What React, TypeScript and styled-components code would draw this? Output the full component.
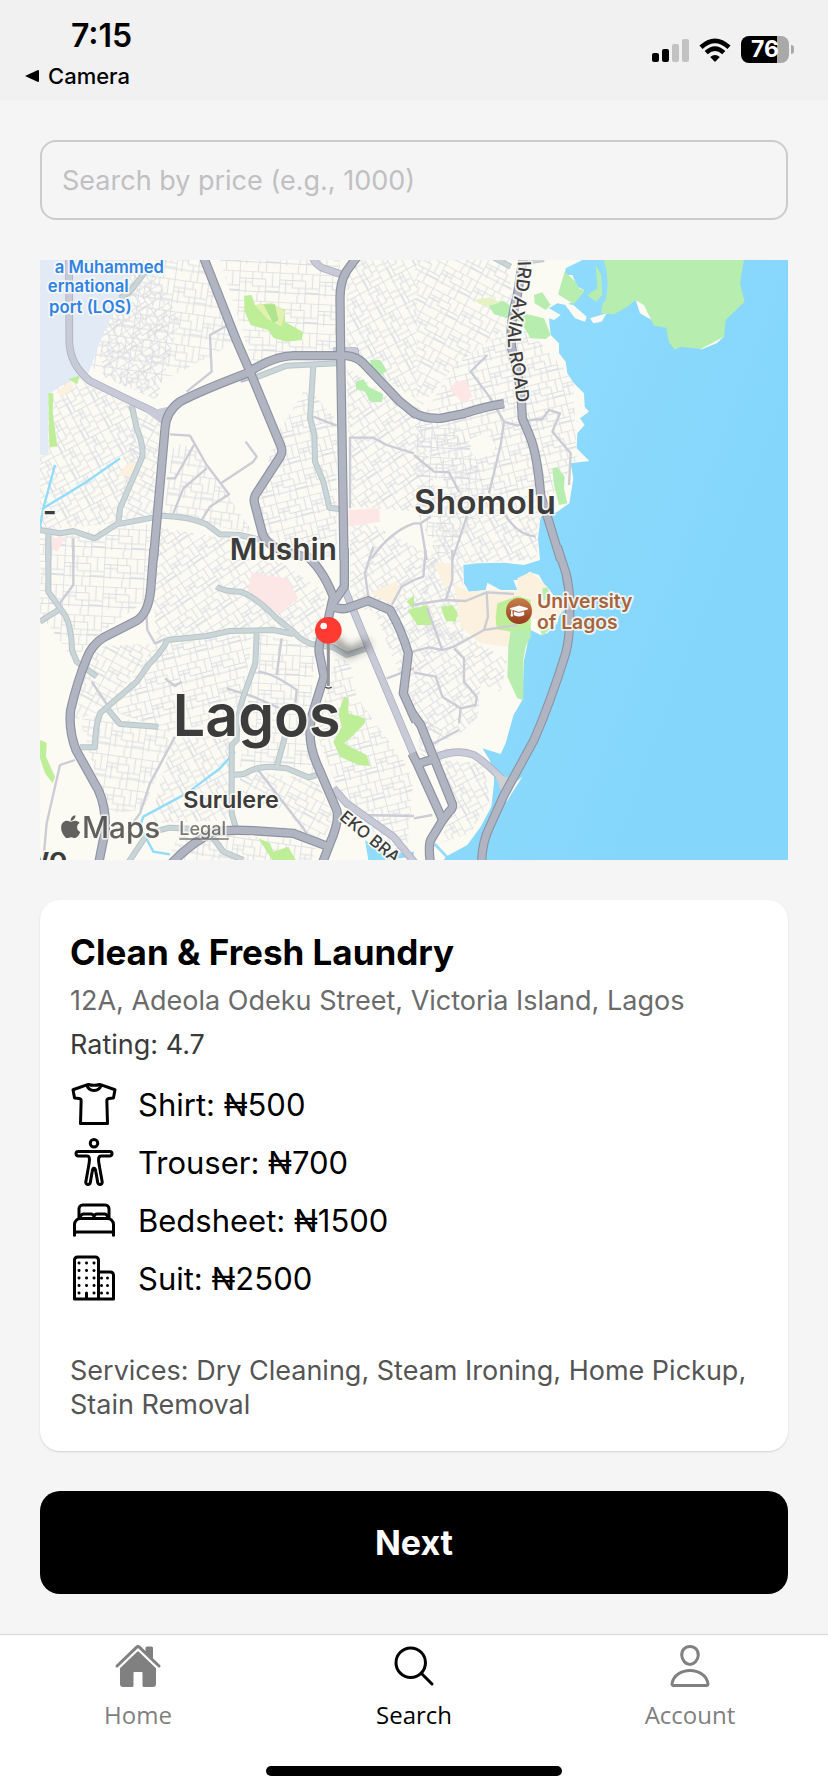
import React from "react";
import styled, { createGlobalStyle } from "styled-components";
import {
  IoShirtOutline,
  IoBodyOutline,
  IoBedOutline,
  IoBusinessOutline,
  IoHome,
  IoSearchOutline,
  IoPersonOutline,
} from "react-icons/io5";
import { FaApple, FaGraduationCap } from "react-icons/fa";
import type { IconType } from "react-icons";

const GlobalStyle = createGlobalStyle`
  *, *::before, *::after { box-sizing: border-box; }
  body {
    margin: 0;
    background: #f5f5f5;
    color: #000;
    font-family: Inter, "Liberation Sans", sans-serif;
  }
`;

const Screen = styled.div`
  display: flex;
  flex-direction: column;
  min-height: 100vh;
`;

/* ---------- status bar ---------- */

const StatusBar = styled.header`
  display: flex;
  justify-content: space-between;
  align-items: flex-start;
  height: 100px;
  padding: 16px 39px 0 24px;
  background: #f1f1f1;
`;

const StatusLeft = styled.div`
  display: flex;
  flex-direction: column;
`;

const Time = styled.time`
  padding-left: 47px;
  font-size: 32px;
  line-height: 40px;
  font-weight: 600;
`;

const BackLink = styled.a`
  display: flex;
  align-items: center;
  gap: 8px;
  color: #000;
  font-size: 22px;
  line-height: 40px;
  font-weight: 500;
  text-decoration: none;
`;

const StatusIcons = styled.div`
  display: flex;
  align-items: center;
  gap: 10px;
  padding-top: 20px;
`;

const Battery = styled.div`
  position: relative;
  width: 48px;
  height: 27px;
  border-radius: 8px;
  background: linear-gradient(to right, #000 76%, #a9a9a9 76%);
  color: #fff;
  font-size: 23px;
  line-height: 27px;
  font-weight: 700;
  text-align: center;

  &::after {
    content: "";
    position: absolute;
    top: 9px;
    right: -5px;
    width: 3px;
    height: 9px;
    border-radius: 0 4px 4px 0;
    background: #a9a9a9;
  }
`;

/* ---------- content ---------- */

const Main = styled.main`
  display: flex;
  flex: 1;
  flex-direction: column;
  gap: 40px;
  padding: 40px;
`;

const SearchInput = styled.input`
  width: 100%;
  height: 80px;
  padding: 0 20px;
  border: 2px solid #cccccc;
  border-radius: 16px;
  background: transparent;
  color: #000;
  font-family: inherit;
  font-size: 27px;

  &::placeholder {
    color: #c0c0c2;
    opacity: 1;
  }
`;

const MapFrame = styled.section`
  height: 600px;
  overflow: hidden;
  background: #87d7fb;

  > svg {
    display: block;
    width: 100%;
    height: 100%;
  }
`;

const MapText = styled.text<{ $size: number; $weight?: number; $fill?: string }>`
  font-family: Inter, "Liberation Sans", sans-serif;
  font-size: ${(p) => p.$size}px;
  font-weight: ${(p) => p.$weight ?? 600};
  fill: ${(p) => p.$fill ?? "#3c3c3c"};
  stroke: #fbfaf5;
  stroke-opacity: 0.85;
  stroke-width: 11px;
  stroke-linejoin: round;
  paint-order: stroke;
`;

const Card = styled.article`
  padding: 30px 30px 29px;
  border-radius: 20px;
  background: #fff;
  box-shadow: 0 1px 2px rgba(0, 0, 0, 0.14);
`;

const Title = styled.h1`
  margin: 0 0 10px;
  font-size: 35px;
  line-height: 44px;
  font-weight: 700;
`;

const Address = styled.p`
  margin: 0 0 10px;
  color: #6b6b6b;
  font-size: 27px;
  line-height: 34px;
`;

const Rating = styled.p`
  margin: 0 0 18px;
  color: #3a3a3a;
  font-size: 27px;
  line-height: 34px;
`;

const PriceList = styled.ul`
  display: flex;
  flex-direction: column;
  gap: 10px;
  margin: 0;
  padding: 0;
  list-style: none;
`;

const PriceRow = styled.li`
  display: flex;
  align-items: center;
  gap: 20px;
  height: 48px;
  font-size: 31px;
`;

const Services = styled.p`
  margin: 52px 0 0;
  color: #555;
  font-size: 27px;
  line-height: 34px;
`;

const NextButton = styled.button`
  width: 100%;
  height: 103px;
  border: 0;
  border-radius: 20px;
  background: #000;
  color: #fff;
  font-family: inherit;
  font-size: 34px;
  font-weight: 700;
`;

/* ---------- tab bar ---------- */

const TabBar = styled.footer`
  display: flex;
  flex-direction: column;
  align-items: center;
  gap: 34px;
  padding: 7px 0 16px;
  border-top: 1px solid #d6d6d6;
  background: #fff;
`;

const Tabs = styled.nav`
  display: grid;
  grid-template-columns: repeat(3, 1fr);
  width: 100%;
`;

const Tab = styled.a<{ $active?: boolean }>`
  display: flex;
  flex-direction: column;
  align-items: center;
  gap: 8px;
  color: ${(p) => (p.$active ? "#000" : "#808080")};
  font-family: "Open Sans", "Noto Sans", sans-serif;
  font-size: 24px;
  line-height: 34px;
  text-decoration: none;
`;

const HomeIndicator = styled.div`
  width: 296px;
  height: 10px;
  border-radius: 5px;
  background: #000;
`;

/* ---------- map data: four tiles, three units per pixel ---------- */

type Tile = "nw" | "ne" | "sw" | "se";
type Line = [Tile, string];

const shift: Record<Tile, string> = {
  nw: "translate(0 -15)",
  ne: "translate(1122 -15)",
  sw: "translate(0 870)",
  se: "translate(1122 870)",
};

const highways: Line[] = [
  ["nw", "M488 0L590 258L630 350L722 572Q730 590 720 606L646 720Q640 732 644 746L668 838Q676 860 710 880L790 905"],
  ["nw", "M955 0L920 48Q900 80 900 130L902 300L912 915"],
  ["nw", "M340 915L375 520Q378 470 420 440Q480 408 620 355Q700 303 760 302L920 302Q950 305 970 325L1080 440L1130 480"],
  ["ne", "M-10 465Q20 492 80 490L150 476Q210 455 270 446"],
  ["ne", "M330 -5L310 120Q285 210 293 280L320 400L325 490L348 545Q370 600 380 720L440 915"],
  ["se", "M430 -10L456 70Q470 130 467 190Q468 260 455 310C430 390 395 490 360 570L270 735L225 835Q203 880 203 945"],
  ["sw", "M790 10Q845 50 880 140L862 220Q828 280 840 320L852 380L815 500Q800 570 830 640L890 780Q900 810 870 880L845 945"],
  ["sw", "M913 -5L913 110L875 165Q890 180 920 175L985 152L1050 180Q1085 240 1105 310L1090 430L1128 515"],
  ["sw", "M342 -5L332 120Q325 190 290 212L190 263Q155 285 140 325Q110 400 92 480Q85 540 108 600L175 720Q198 770 196 840L175 945"],
  ["se", "M-8 485L20 525L115 762Q118 775 105 785L85 812L50 870Q42 890 50 945"],
  ["se", "M-6 610L10 642L55 628M10 642L84 805"],
  ["sw", "M390 945Q450 880 520 846Q560 838 640 842L760 850L860 888"],
];

const ramps: Line[] = [
  ["nw", "M87 0L88 260Q90 330 150 378L260 432L330 465L378 490"],
  ["nw", "M815 0Q825 30 850 40L910 60"],
  ["nw", "M880 288L945 288L950 318M600 372L640 360"],
  ["sw", "M915 120L985 290L1128 630"],
  ["sw", "M880 715L920 760L1060 860L1130 945"],
  ["se", "M65 622Q130 595 180 615Q220 640 282 706"],
];

const avenues: Line[] = [
  ["nw", "M0 825L60 835L100 828L165 850L230 808L370 782Q450 785 500 808L540 838L600 840L690 862"],
  ["nw", "M275 450L290 520Q315 580 305 610L240 760L235 805"],
  ["nw", "M820 330L810 490L823 540L825 620L850 680L868 758L905 763"],
  ["nw", "M640 370L740 332L890 325"],
  ["nw", "M320 45L270 110L240 130"],
  ["nw", "M25 835L25 915"],
  ["ne", "M235 5L290 35M330 20L390 12"],
  ["sw", "M25 -10L25 125L75 195Q95 230 96 300L110 335L170 380M0 215L55 180"],
  ["sw", "M530 110Q550 125 600 125Q640 135 710 205L760 245Q790 280 830 285L880 292L920 315L980 295"],
  ["sw", "M382 270L500 258L570 243L700 240L760 252M382 270Q370 300 325 345L290 395L180 490Q165 530 165 592L120 592"],
  ["sw", "M205 480L240 522L355 530"],
  ["sw", "M650 250L646 340L610 440Q590 500 590 570L575 585L575 790L588 835"],
  ["sw", "M575 675L612 672Q645 650 690 650L740 655L805 682L830 675M735 560L710 650"],
  ["sw", "M315 862L260 945M340 845L390 833L450 836M520 865L550 905L610 930"],
];

const localRoads: Line[] = [
  ["nw", "M390 538L450 542L500 630L567 718L510 755L485 795M462 570L405 670L380 670M500 640L430 700L400 775"],
  ["nw", "M617 560L650 605L640 620L545 683M930 760L930 548L1000 548L1040 570L1122 595M1122 805Q1050 830 995 910"],
  ["nw", "M440 410L515 350L510 240L560 212M820 485L890 512M100 850L100 915"],
  ["ne", "M220 300L170 350L230 430L270 500L310 512L350 495L385 492L405 465L438 475L415 530L470 595L465 690"],
  ["ne", "M270 500L260 570L225 715M0 600L60 650L105 652L135 710M160 780L115 915M0 805L20 805L38 915M50 785L20 805M270 775Q310 840 365 845"],
  ["sw", "M100 -10L100 105L55 165M318 170L322 240L345 280L380 265M1000 -10L975 70L985 140M1122 90L1085 110L1055 165"],
  ["sw", "M155 395L205 470M405 560L330 700L300 790L270 830M105 630L60 645L20 820L10 930M655 365Q700 370 770 420L765 470M725 265L710 375"],
  ["sw", "M560 415L640 440L720 475M375 385L405 408L425 395M650 655L790 835L800 850M960 795L1122 798M1040 385L1122 355"],
  ["se", "M-5 165L90 150L155 153L218 127L300 132M218 127L222 200L210 240L120 290L85 300L45 292L-5 305M210 240L310 225M40 175L85 300"],
  ["se", "M120 295L150 325L150 395L188 440L185 465L140 475L135 520M0 368L65 380L85 440L140 475M115 0L115 90L95 150M0 90L28 80L35 0M50 585L135 540M0 805L55 795"],
];

const parks: Line[] = [
  ["nw", "M612 122L635 120L645 150L690 145L735 165L735 200L790 232L785 255L740 260L700 248L685 225L632 210L614 170Z"],
  ["nw", "M25 415L40 415L38 470L52 575L28 575ZM85 372L118 362L112 388Z"],
  ["sw", "M0 570L20 578L18 620L45 680L38 700L15 670L0 625ZM1100 155L1122 135L1122 180Z"],
  ["sw", "M912 440L925 445L925 490L975 505L975 520L935 560L912 580L930 590L980 615L990 648L955 645L900 620L880 575L905 530L895 490Z"],
  ["sw", "M655 865L690 880L700 905L745 890L770 935L700 935Z"],
  ["se", "M-20 180L40 165L55 225L10 225ZM80 170L115 165L132 190L125 215L95 212ZM245 200L250 160L310 138L350 150L350 240L290 245L248 238Z"],
];

const parksCool: Line[] = [
  ["nw", "M990 315L1020 315L1040 345L1025 360L995 340ZM948 380L970 372L985 395L1030 418L1025 442L990 440L975 410L948 402Z"],
  ["ne", "M556 0L992 0L978 85L992 140L935 195L930 245L860 282L800 275L782 284L765 262L757 218L720 212L690 150L665 135L640 155L600 178L560 175L575 100Z"],
  ["ne", "M452 50L485 80L495 100L512 108L480 148L432 118ZM545 30L562 60L565 120L545 140L520 120L550 100ZM360 120L385 112L410 150L395 165L362 145Z"],
  ["ne", "M220 145L270 138L310 170L390 190L410 240L395 252L350 250L320 200L240 178Z"],
  ["ne", "M415 640L430 637L452 665L450 700L460 745L435 750L420 690Z"],
  ["se", "M290 240L350 235L350 260L335 290L328 330L328 450L310 445L280 380L283 290ZM385 115L400 112L410 150L388 150ZM375 230L430 215L385 258Z"],
];

const pinkAreas: Line[] = [
  ["nw", "M925 765L1018 760L1020 800L925 815ZM35 850L78 845L52 890L34 882Z"],
  ["ne", "M105 405L125 380L155 375L175 425L150 445Z"],
  ["sw", "M635 68L740 85L775 145L715 193L625 120Z"],
];

const sandAreas: Line[] = [
  ["nw", "M235 662L265 622L290 625L275 662ZM50 410L95 375L100 400L70 424Z"],
  ["sw", "M990 130L1070 92L1075 125L1060 165Z"],
  ["se", "M62 40L115 40L112 95L92 118L80 85ZM120 100L165 125L220 120L310 125L310 85L350 65L400 110L450 180L420 215L320 200L285 290L200 280L140 230Z"],
];

const blankLots: Line[] = [
  ["nw", "M405 490L600 390L640 400L700 540L690 600L545 683L450 542L395 535Z"],
  ["nw", "M645 365L740 345L720 480L700 500Z"],
  ["ne", "M365 15L450 50L440 115L400 110L360 115L330 80Z"],
  ["ne", "M165 555L215 530L245 570L235 600L180 605Z"],
  ["sw", "M930 330L980 320L1122 640L1080 620L950 440Z"],
  ["sw", "M0 480L80 480L100 610L0 560ZM60 660L120 650L180 760L160 900L30 900Z"],
  ["sw", "M590 760L740 780L780 835L600 830Z"],
  ["se", "M200 400L320 455L260 600L200 590L130 600L60 590L190 520Z"],
];

const landPath =
  "M0 0H1627L1577 25L1574 45L1597 45L1612 80L1632 90L1602 125L1577 135L1552 130L1527 145L1562 165L1542 180L1527 175L1532 225L1557 250L1557 280L1577 305L1582 340L1602 370L1632 400L1634 440L1647 455L1620 475L1634 495L1612 520L1610 565L1648 603L1592 610L1600 655L1588 730L1552 755L1502 770L1494 835L1500 900L1452 915L1392 908L1312 910L1270 915L1272 970L1287 995L1337 990L1342 968L1382 990L1432 990L1420 960L1452 960L1467 935L1497 945L1522 990L1562 1050L1552 1090L1522 1120L1502 1125L1472 1110L1452 1200L1447 1320L1420 1365L1397 1450L1382 1482L1327 1465L1352 1505L1332 1510L1362 1540L1362 1570L1354 1640L1322 1700L1282 1755L1217 1790L1212 1800H0Z";

/* Neighbourhood blocks: outline in map units, with the street grid drawn in each. */
const districts: [number, string][] = [
  [0, "M0 0H500L600 240L300 400L150 320L80 200Z"],
  [1, "M170 60L330 20L420 180L350 420L190 350Z"],
  [2, "M540 0H900V280H740L640 320Z"],
  [3, "M920 0H1130V420L920 280Z"],
  [4, "M1130 0H1400L1430 180L1240 320L1130 460Z"],
  [5, "M1240 320L1440 180L1600 360L1610 600L1500 760H1260L1130 500Z"],
  [1, "M920 320L1140 480L1200 760L930 740Z"],
  [2, "M1130 500H1260L1360 720L1200 900L1130 760Z"],
  [3, "M0 330L140 350L270 440L300 600L220 790L0 810Z"],
  [4, "M280 450L360 480L340 760L240 790Z"],
  [0, "M400 550L460 560L560 700L640 820L370 770Z"],
  [5, "M700 540L800 380L890 480V900L690 840L650 740Z"],
  [1, "M930 760L1200 900L1130 1080L930 1040Z"],
  [3, "M1200 740L1500 770L1490 900L1270 910V1150L1130 1120Z"],
  [2, "M0 830L330 790L320 1020L180 1120L100 1200L0 1060Z"],
  [1, "M350 800L640 850L860 1000L830 1140L640 1110L350 1150L340 1000Z"],
  [4, "M160 1160L350 1150L200 1350L100 1380Z"],
  [5, "M350 1150L640 1120L600 1360L400 1420L210 1350Z"],
  [0, "M120 1380L200 1360L400 1420L310 1650L200 1660Z"],
  [3, "M400 1420H570V1680L330 1690Z"],
  [2, "M650 1120L830 1160L800 1430L830 1540L600 1520Z"],
  [5, "M890 1180L960 1240L1010 1340L1120 1560L1100 1790L920 1660L830 1420Z"],
  [1, "M990 1020L1130 1050L1320 1150L1400 1200L1380 1310L1250 1430L1140 1400Z"],
  [4, "M1130 1360L1250 1440L1190 1520L1140 1480Z"],
  [3, "M1190 1500L1330 1510L1350 1620L1290 1720L1200 1750L1240 1640Z"],
  [4, "M600 1530L830 1560L880 1670L850 1740L600 1700Z"],
  [0, "M420 1720L830 1740L820 1800H380Z"],
];

const grids = [
  { angle: 8, w: 34, h: 24 },
  { angle: -34, w: 32, h: 20 },
  { angle: 3, w: 40, h: 22 },
  { angle: 62, w: 30, h: 20 },
  { angle: 28, w: 36, h: 20 },
  { angle: -14, w: 34, h: 20 },
];

const Shapes = ({ items, fill }: { items: Line[]; fill: string }) => (
  <g fill={fill}>
    {items.map(([tile, d]) => (
      <path key={tile + d} d={d} transform={shift[tile]} />
    ))}
  </g>
);

const Roads = ({ items, color, width }: { items: Line[]; color: string; width: number }) => (
  <g fill="none" stroke={color} strokeWidth={width} strokeLinejoin="round">
    {items.map(([tile, d]) => (
      <path key={tile + d} d={d} transform={shift[tile]} />
    ))}
  </g>
);

const MapView = () => (
  <svg viewBox="0 0 2244 1800" preserveAspectRatio="xMidYMid slice" role="img" aria-label="Map of Lagos">
    <defs>
      <linearGradient id="sea" x1="0" y1="0" x2="1" y2="0.3">
        <stop offset="0.55" stopColor="#91dcfd" />
        <stop offset="1" stopColor="#84d6fb" />
      </linearGradient>
      <linearGradient id="campus" x1="0" y1="0" x2="0" y2="1">
        <stop offset="0" stopColor="#c8804a" />
        <stop offset="1" stopColor="#953c1e" />
      </linearGradient>
      <filter id="soft" x="-50%" y="-100%" width="200%" height="300%">
        <feGaussianBlur stdDeviation="12" />
      </filter>
      <clipPath id="land">
        <path d={landPath} />
      </clipPath>
      {grids.map(({ angle, w, h }, i) => (
        <pattern
          key={i}
          id={`streets-${i}`}
          width={w * 3}
          height={h * 4}
          patternUnits="userSpaceOnUse"
          patternTransform={`rotate(${angle})`}
        >
          <path
            d={`M0 1H${w * 3}M0 ${h}H${w * 2}M${w} ${h * 2}H${w * 3}M0 ${h * 3 - 6}H${w * 3}M${w} 0V${h * 2}M${w * 2} ${h}V${h * 4}M${w / 2} ${h}V${h * 3}M1 0V${h * 4}M${w * 2.5} 0V${h * 2}M${w * 1.4} ${h * 3}V${h * 4}M0 ${h * 1.5}H${w}M${w * 2} ${h * 2.6}H${w * 3}M${w * 1.7} 0V${h}M${w * 1.5} ${h * 2}V${h * 3}`}
            fill="none"
            stroke="#d9dbe2"
            strokeWidth="3"
          />
        </pattern>
      ))}
      <path id="axial-road" d="M1432 -30L1434 35Q1420 140 1406 200Q1398 260 1420 340L1436 475" />
      <path id="eko-bridge" d="M896 1676L1060 1810" />
    </defs>

    <rect width="2244" height="1800" fill="url(#sea)" />
    <path d={landPath} fill="#fbfaf3" />
    <g fill="#fcfaf3">
      <path d="M1447 1550L1397 1630L1410 1580Z" />
      <path d="M1692 20L1722 10L1740 35L1735 55L1705 70ZM1572 130L1600 135L1640 170L1635 185L1605 175ZM1650 175L1700 160L1685 185L1660 190ZM1787 120L1842 150L1835 180L1800 160ZM1980 270L2010 240L2054 228L2030 250Z" />
    </g>

    <g clipPath="url(#land)">
      {districts.map(([grid, d]) => (
        <path key={d} d={d} fill={`url(#streets-${grid})`} opacity={0.9} />
      ))}
      <Shapes items={blankLots} fill="#fbfaf3" />
    </g>

    <path d="M0 0H300L235 130L190 220L145 340L130 355L70 370L25 405V585H0Z" fill="#e2eaf6" />
    <Shapes items={sandAreas} fill="#fcf0df" />
    <Shapes items={pinkAreas} fill="#fde6e6" />
    <Shapes items={parks} fill="#bfee98" />
    <Shapes items={parksCool} fill="#b7edae" />
    <path d="M645 135L700 130L735 155L725 200L680 175Z" fill="#e2f1b0" />
    <path d="M670 133H705L715 180L700 190Z" fill="#b0e590" />
    <path d="M1302 120L1350 112L1380 128L1335 140Z" fill="#e5f3c4" />
    <path d="M1685 0Q1705 60 1690 120L1670 130" fill="none" stroke="#91dcfd" strokeWidth="13" />
    <path
      d="M45 615L10 745L0 800M240 595L140 665L10 745M585 1475L540 1525L440 1600L310 1670L300 1700L340 1775L390 1783"
      fill="none"
      stroke="#8fdcfc"
      strokeWidth="7"
    />
    <path d="M975 1740L1010 1765L1050 1780L1122 1775L1120 1790L1030 1800H985Z" fill="#91dcfd" />
    <path d="M1184 1752L1220 1790" stroke="#91dcfd" strokeWidth="8" />

    <Roads items={localRoads} color="#cbccd6" width={7} />
    <Roads items={avenues} color="#b9c5ca" width={18} />
    <Roads items={avenues} color="#cad5d8" width={12} />
    <Roads items={ramps} color="#aeb1c2" width={23} />
    <Roads items={ramps} color="#c9cad8" width={18} />
    <path d="M1358 1530L1398 1552L1418 1545L1385 1600L1375 1570Z" fill="#cfd0d5" />
    <path d="M315 455L385 440L370 495Z" fill="#c9cad8" />
    <Roads items={highways} color="#8e93a4" width={28} />
    <Roads items={highways} color="#b1b5c2" width={21} />

    <MapText $size={50} $fill="#2f83e6" x="372" y="38" textAnchor="end">a Muhammed</MapText>
    <MapText $size={50} $fill="#2f83e6" x="266" y="97" textAnchor="end">ernational</MapText>
    <MapText $size={50} $fill="#2f83e6" x="275" y="158" textAnchor="end">port (LOS)</MapText>
    <MapText $size={90} x="730" y="899" textAnchor="middle">Mushin</MapText>
    <MapText $size={100} x="1335" y="761" textAnchor="middle">Shomolu</MapText>
    <MapText $size={172} x="650" y="1427" textAnchor="middle">Lagos</MapText>
    <MapText $size={70} x="573" y="1644" textAnchor="middle">Surulere</MapText>
    <MapText $size={90} x="8" y="785">-</MapText>
    <MapText $size={90} x="82" y="1828" textAnchor="end">wo</MapText>
    <MapText $size={54} $weight={500}>
      <textPath href="#axial-road" startOffset="34">IRD AXIAL ROAD</textPath>
    </MapText>
    <MapText $size={50} $weight={500}>
      <textPath href="#eko-bridge">EKO BRA</textPath>
    </MapText>

    <circle cx="1437" cy="1053" r="39" fill="url(#campus)" />
    <svg x="1410" y="1026" width="54" height="54" viewBox="0 0 54 54">
      <FaGraduationCap size={54} color="#fff" />
    </svg>
    <MapText $size={58} $fill="#a9633a" x="1491" y="1045">University</MapText>
    <MapText $size={58} $fill="#a9633a" x="1491" y="1108">of Lagos</MapText>

    <path d="M880 1135L925 1180L985 1150" fill="none" stroke="#333" strokeOpacity="0.6" strokeWidth="22" filter="url(#soft)" />
    <path d="M865 1145V1278" stroke="#94949a" strokeWidth="9" />
    <path d="M856 1281Q865 1288 875 1281" fill="none" stroke="#444" strokeWidth="4" />
    <circle cx="865" cy="1111" r="40" fill="#ff3a30" />
    <circle cx="851" cy="1098" r="10" fill="#fff" />

    <g opacity="0.88">
      <svg x="53" y="1661" width="78" height="78" viewBox="0 0 78 78">
        <FaApple size={78} color="#4d4d4b" />
      </svg>
      <MapText $size={89} $weight={500} $fill="#4d4d4b" x="126" y="1735">Maps</MapText>
      <a href="#legal">
        <MapText $size={54} $weight={500} $fill="#6a6a68" x="418" y="1726">Legal</MapText>
        <path d="M418 1737H566" stroke="#6a6a68" strokeWidth="4" />
      </a>
    </g>
  </svg>
);

/* ---------- page data ---------- */

const prices: { icon: IconType; label: string; price: number }[] = [
  { icon: IoShirtOutline, label: "Shirt", price: 500 },
  { icon: IoBodyOutline, label: "Trouser", price: 700 },
  { icon: IoBedOutline, label: "Bedsheet", price: 1500 },
  { icon: IoBusinessOutline, label: "Suit", price: 2500 },
];

const tabs: { icon: IconType; label: string; active?: boolean }[] = [
  { icon: IoHome, label: "Home" },
  { icon: IoSearchOutline, label: "Search", active: true },
  { icon: IoPersonOutline, label: "Account" },
];

export default function App() {
  return (
    <Screen>
      <GlobalStyle />
      <StatusBar>
        <StatusLeft>
          <Time>7:15</Time>
          <BackLink href="#camera">
            <svg width="16" height="14" viewBox="0 0 16 14" aria-hidden="true">
              <path d="M1 7L14 1Q15 1 15 2V12Q15 13 14 13Z" />
            </svg>
            Camera
          </BackLink>
        </StatusLeft>
        <StatusIcons>
          <svg width="37" height="24" viewBox="0 0 37 24" aria-label="Signal">
            <rect x="0" y="15" width="7" height="9" rx="2" />
            <rect x="10" y="11" width="7" height="13" rx="2" />
            <rect x="20" y="6" width="7" height="18" rx="2" fill="#c2c2c2" />
            <rect x="30" y="1" width="7" height="23" rx="2" fill="#c2c2c2" />
          </svg>
          <svg width="32" height="24" viewBox="0 0 32 24" aria-label="Wi-Fi">
            <path d="M16 24L11.2 19Q16 15.2 20.8 19Z" />
            <path d="M2 9.2Q16 -3.6 30 9.2" fill="none" stroke="#000" strokeWidth="4.6" />
            <path d="M7.2 14.6Q16 6.6 24.8 14.6" fill="none" stroke="#000" strokeWidth="4.6" />
          </svg>
          <Battery>76</Battery>
        </StatusIcons>
      </StatusBar>

      <Main>
        <SearchInput type="text" aria-label="Search by price" placeholder="Search by price (e.g., 1000)" />
        <MapFrame>
          <MapView />
        </MapFrame>
        <Card>
          <Title>Clean &amp; Fresh Laundry</Title>
          <Address>12A, Adeola Odeku Street, Victoria Island, Lagos</Address>
          <Rating>Rating: 4.7</Rating>
          <PriceList>
            {prices.map(({ icon: Icon, label, price }) => (
              <PriceRow key={label}>
                <Icon size={48} />
                <span>{`${label}: ₦${price}`}</span>
              </PriceRow>
            ))}
          </PriceList>
          <Services>Services: Dry Cleaning, Steam Ironing, Home Pickup, Stain Removal</Services>
        </Card>
        <NextButton type="button">Next</NextButton>
      </Main>

      <TabBar>
        <Tabs>
          {tabs.map(({ icon: Icon, label, active }) => (
            <Tab key={label} href={`#${label.toLowerCase()}`} $active={active}>
              <Icon size={48} />
              {label}
            </Tab>
          ))}
        </Tabs>
        <HomeIndicator />
      </TabBar>
    </Screen>
  );
}
